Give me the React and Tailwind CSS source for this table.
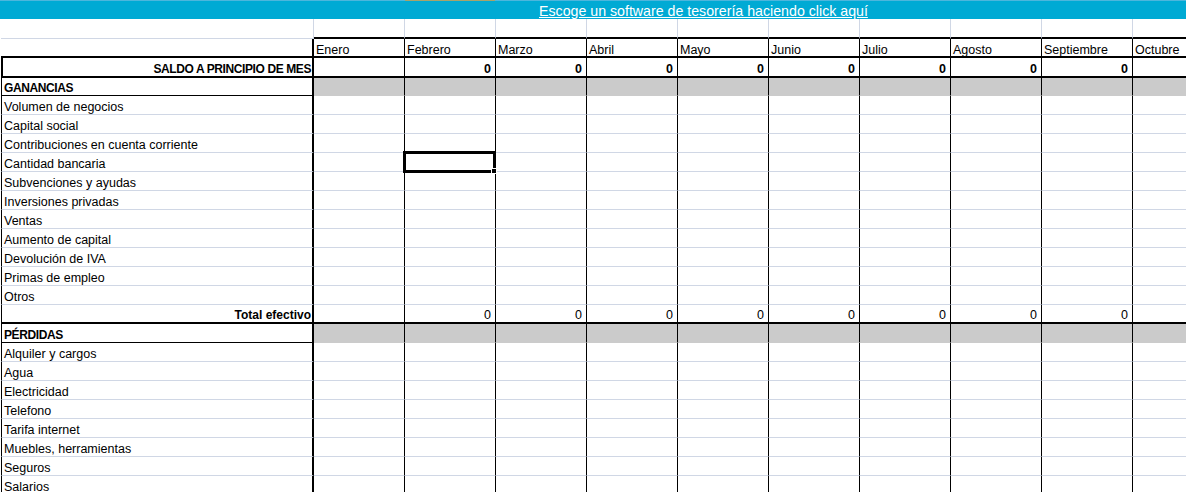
import React from "react";

const months = ["Enero", "Febrero", "Marzo", "Abril", "Mayo", "Junio", "Julio", "Agosto", "Septiembre", "Octubre"];
const ganancias = [
  "Volumen de negocios",
  "Capital social",
  "Contribuciones en cuenta corriente",
  "Cantidad bancaria",
  "Subvenciones y ayudas",
  "Inversiones privadas",
  "Ventas",
  "Aumento de capital",
  "Devolución de IVA",
  "Primas de empleo",
  "Otros",
];
const perdidas = [
  "Alquiler y cargos",
  "Agua",
  "Electricidad",
  "Telefono",
  "Tarifa internet",
  "Muebles, herramientas",
  "Seguros",
  "Salarios",
];

const M = "w-[91px] shrink-0";
const A = "w-[313px] shrink-0";

function DataRow({ label, selectedCol }) {
  return (
    <div className="flex h-[19px] pl-[1px]">
      <div className={`${A} flex items-end pl-[2px] text-[12.5px] leading-[14px] border-l border-l-black border-b border-b-[#d0d7e5] border-r-2 border-r-black whitespace-nowrap`}>
        {label}
      </div>
      {months.map((m, i) => (
        <div key={m} className={`${M} relative border-r border-r-black border-b border-b-[#d0d7e5]`}>
          {selectedCol === i && (
            <div className="absolute -left-[2px] -top-[2px] w-[93px] h-[22px] border-[3px] border-black z-10">
              <div className="absolute -right-[4px] -bottom-[4px] w-[6px] h-[6px] bg-black border border-white" />
            </div>
          )}
        </div>
      ))}
    </div>
  );
}

function SectionRow({ label, h }) {
  return (
    <div className={`flex ${h} pl-[1px]`}>
      <div className={`${A} flex items-end pl-[2px] text-[12px] tracking-[-0.4px] leading-[14px] font-bold border-l border-b border-black border-r-2 border-r-black`}>
        {label}
      </div>
      {months.map((m) => (
        <div key={m} className={`${M} bg-[#cbcbcb] border-r border-r-black border-b border-b-[#cbcbcb]`} />
      ))}
    </div>
  );
}

export default function App() {
  return (
    <div className="w-[1186px] h-[492px] overflow-hidden bg-white text-black font-['Liberation_Sans',Arial,sans-serif]">
      {/* top stripe */}
      <div className="flex h-[1px]">
        <div className="w-[405px] bg-[#4db6dc]" />
        <div className="w-[90px] bg-[#a8a36a]" />
        <div className="flex-1 bg-[#4db6dc]" />
      </div>
      {/* blue banner */}
      <div className="h-[18px] bg-[#00aad4] flex items-end pl-[539px]">
        <span className="text-white underline text-[14.2px] leading-[16px] whitespace-nowrap">
          Escoge un software de tesorería haciendo click aquí
        </span>
      </div>

      {/* empty row */}
      <div className="flex h-[20px] pl-[1px]">
        <div className={`${A} border-r border-b border-[#d0d7e5]`} />
        {months.map((m) => (
          <div key={m} className={`${M} border-r border-r-[#d0d7e5] border-b-2 border-b-black`} />
        ))}
      </div>

      {/* header months */}
      <div className="flex h-[19px] pl-[1px]">
        <div className={`${A} border-r-2 border-b-2 border-black`} />
        {months.map((m) => (
          <div key={m} className={`${M} flex items-end pl-[2px] text-[12.5px] leading-[14px] border-r border-b-2 border-black whitespace-nowrap`}>
            <span className="relative top-[1px]">{m}</span>
          </div>
        ))}
      </div>

      {/* saldo */}
      <div className="flex h-[20px] pl-[1px]">
        <div className={`${A} flex items-end justify-end pr-[1px] text-[12px] tracking-[-0.4px] leading-[14px] font-bold border-l-2 border-r-2 border-b-2 border-black whitespace-nowrap`}>
          SALDO A PRINCIPIO DE MES
        </div>
        {months.map((m, i) => (
          <div key={m} className={`${M} flex items-end justify-end pr-[4px] text-[12.5px] leading-[14px] font-bold border-r border-b-2 border-black`}>
            {i > 0 && i < 9 ? "0" : ""}
          </div>
        ))}
      </div>

      <SectionRow label="GANANCIAS" h="h-[18px]" />
      {ganancias.map((g) => (
        <DataRow key={g} label={g} selectedCol={g === "Cantidad bancaria" ? 1 : -1} />
      ))}

      {/* total */}
      <div className="flex h-[19px] pl-[1px]">
        <div className={`${A} flex items-end justify-end pr-[1px] text-[12px] leading-[14px] font-bold border-l border-r-2 border-b-2 border-black whitespace-nowrap`}>
          Total efectivo
        </div>
        {months.map((m, i) => (
          <div key={m} className={`${M} flex items-end justify-end pr-[4px] text-[12.5px] leading-[14px] border-r border-b-2 border-black`}>
            {i > 0 && i < 9 ? "0" : ""}
          </div>
        ))}
      </div>

      <SectionRow label="PÉRDIDAS" h="h-[19px]" />
      {perdidas.map((p) => (
        <DataRow key={p} label={p} selectedCol={-1} />
      ))}
    </div>
  );
}
